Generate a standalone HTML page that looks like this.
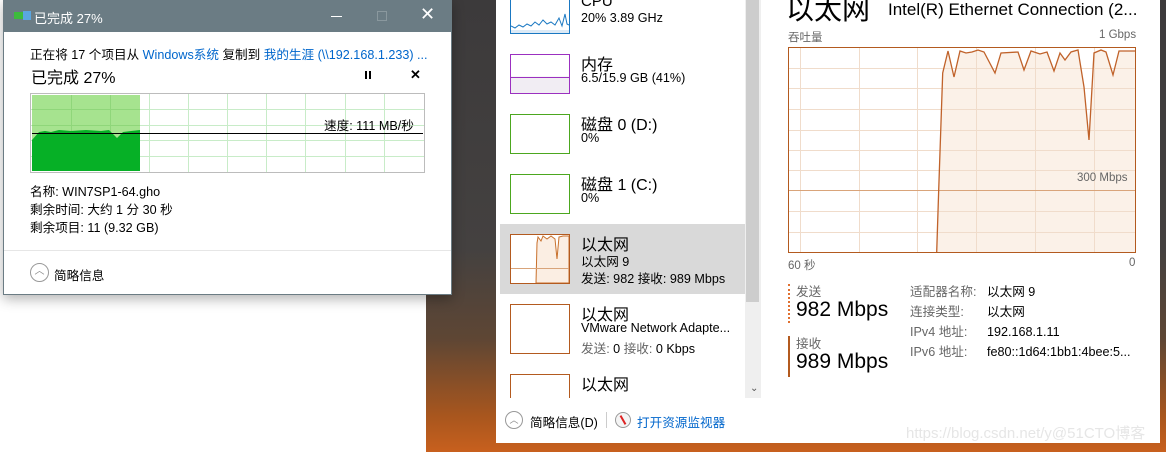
<!DOCTYPE html>
<html><head><meta charset="utf-8"><style>
*{margin:0;padding:0;box-sizing:border-box}
body{width:1166px;height:452px;overflow:hidden;position:relative;background:#fff;font-family:"Liberation Sans","Noto Sans CJK SC",sans-serif;color:#000}
.a{position:absolute;white-space:nowrap}
.bg{position:absolute;left:426px;top:0;width:740px;height:452px;background:linear-gradient(180deg,#3c3a3b 0%,#444140 55%,#5e4634 75%,#a8561e 92%,#c8601e 100%)}
.blue{color:#0066cc}
.gray{color:#666}
</style></head><body>
<div class="bg"></div>
<!-- copy dialog -->
<div class="a" style="left:3px;top:0;width:449px;height:295px;background:#fff;border:1px solid #6b7c84;box-shadow:0 4px 12px rgba(0,0,0,.3)">
 <div class="a" style="left:0;top:0;width:447px;height:31px;background:#6b7c84"></div>
 <div class="a" style="left:10px;top:11px;width:10px;height:7px;background:#3dbb3d"></div>
 <div class="a" style="left:19px;top:10px;width:8px;height:9px;background:#5aa6e0"></div>
 <div class="a" style="left:30px;top:7px;font-size:13px;color:#fff">已完成 27%</div>
 <div class="a" style="left:327px;top:15px;width:11px;height:1px;background:#fff"></div>
 <div class="a" style="left:373px;top:10px;width:10px;height:10px;border:1px solid #8a989e"></div>
 <div class="a" style="left:416px;top:3px;font-size:18px;color:#fff">✕</div>
 <div class="a" style="left:26px;top:43px;font-size:12.6px">正在将 17 个项目从 <span class="blue">Windows系统</span> 复制到 <span class="blue">我的生涯 (\\192.168.1.233) ...</span></div>
 <div class="a" style="left:27px;top:63px;font-size:16px">已完成 27%</div>
 <div class="a" style="left:361px;top:70px;height:8px;border-left:2px solid #000;border-right:2px solid #000;width:6px"></div>
 <div class="a" style="left:406px;top:66px;font-size:13px;font-weight:bold">✕</div>
 <div class="a" style="left:26px;top:92px;width:395px;height:80px;border:1px solid #bcbcbc;background:#fff">
  <svg width="393" height="78" style="position:absolute;left:0;top:0">
   <g stroke="#c8ecc8" stroke-width="1">
    <line x1="118.5" y1="0" x2="118.5" y2="78"/><line x1="157.5" y1="0" x2="157.5" y2="78"/><line x1="196.5" y1="0" x2="196.5" y2="78"/><line x1="235.5" y1="0" x2="235.5" y2="78"/><line x1="274.5" y1="0" x2="274.5" y2="78"/><line x1="314.5" y1="0" x2="314.5" y2="78"/><line x1="353.5" y1="0" x2="353.5" y2="78"/>
    <line x1="0" y1="15.5" x2="393" y2="15.5"/><line x1="0" y1="31.5" x2="393" y2="31.5"/><line x1="0" y1="46.5" x2="393" y2="46.5"/><line x1="0" y1="62.5" x2="393" y2="62.5"/>
   </g>
   <rect x="1" y="1" width="108" height="76" fill="#a6e38f"/>
   <g stroke="#8fd67a"><line x1="40.5" y1="1" x2="40.5" y2="77"/><line x1="79.5" y1="1" x2="79.5" y2="77"/><line x1="1" y1="15.5" x2="109" y2="15.5"/><line x1="1" y1="31.5" x2="109" y2="31.5"/></g>
   <path d="M1,46 L8,38 L14,37 L20,38 L28,36 L40,37 L55,36 L70,37 L78,36 L86,44 L92,38 L100,37 L109,36 L109,77 L1,77Z" fill="#06b026"/>
   <line x1="1" y1="39.5" x2="392" y2="39.5" stroke="#000"/>
  </svg>
  <div class="a" style="left:293px;top:21px;font-size:12.6px">速度: 111 MB/秒</div>
 </div>
 <div class="a" style="left:26px;top:182px;font-size:12.6px;line-height:18px">名称: WIN7SP1-64.gho<br>剩余时间: 大约 1 分 30 秒<br>剩余项目: 11 (9.32 GB)</div>
 <div class="a" style="left:0;top:249px;width:447px;height:1px;background:#e6e6e6"></div>
 <div class="a" style="left:26px;top:262px;width:19px;height:19px;border:1px solid #999;border-radius:50%;font-size:10px;color:#888;text-align:center;line-height:16px">︿</div>
 <div class="a" style="left:50px;top:264px;font-size:12.6px">简略信息</div>
</div>
<!-- task manager -->
<div class="a" style="left:496px;top:0;width:664px;height:443px;background:#fff"></div>
<div class="a" style="left:745px;top:0;width:16px;height:398px;background:#efefef"></div>
<div class="a" style="left:746px;top:0;width:13px;height:302px;background:#cdcdcd"></div>
<div class="a" style="left:750px;top:383px;font-size:10px;color:#555">⌄</div>
<div class="a" style="left:500px;top:224px;width:245px;height:70px;background:#d9d9d9"></div>
<!-- thumbs -->
<div class="a" style="left:510px;top:0;width:60px;height:34px;border:1px solid #1a78c2;border-top:none;background:#fff"><svg width="58" height="33"><path d="M0,26 L4,28 L8,25 L12,27 L16,24 L20,26 L24,22 L28,25 L32,20 L36,24 L40,22 L44,25 L48,18 L51,26 L54,14 L56,24 L58,25" fill="none" stroke="#1a78c2"/><rect x="0" y="30" width="58" height="3" fill="#dceaf6"/></svg></div>
<div class="a" style="left:510px;top:54px;width:60px;height:40px;border:1px solid #9b30c0;background:linear-gradient(#fff 0,#fff 57%,#f1edf3 57%)"><div style="position:absolute;left:0;top:22px;width:58px;height:1px;background:#9b30c0"></div></div>
<div class="a" style="left:510px;top:114px;width:60px;height:40px;border:1px solid #4ca71f"></div>
<div class="a" style="left:510px;top:174px;width:60px;height:40px;border:1px solid #4ca71f"></div>
<div class="a" style="left:510px;top:234px;width:60px;height:50px;border:1px solid #b35a1f;background:#fff"><svg width="58" height="48"><path d="M25,48 L26,8 L27,2 L30,6 L32,1 L36,4 L40,1 L44,4 L46,24 L48,2 L52,1 L58,1 L58,48Z" fill="#fbeee3" stroke="#c8702c"/><line x1="0" y1="33.5" x2="58" y2="33.5" stroke="#d9a47a"/></svg></div>
<div class="a" style="left:510px;top:304px;width:60px;height:50px;border:1px solid #b35a1f"></div>
<div class="a" style="left:510px;top:374px;width:60px;height:24px;border:1px solid #b35a1f;border-bottom:none"></div>
<div class="a" style="left:496px;top:398px;width:264px;height:45px;background:#fff"></div>
<!-- labels -->
<div class="a" style="left:581px;top:-7px;font-size:15px">CPU</div>
<div class="a" style="left:581px;top:11px;font-size:12.6px">20% 3.89 GHz</div>
<div class="a" style="left:581px;top:51px;font-size:16px">内存</div>
<div class="a" style="left:581px;top:71px;font-size:12.6px">6.5/15.9 GB (41%)</div>
<div class="a" style="left:581px;top:111px;font-size:16px">磁盘 0 (D:)</div>
<div class="a" style="left:581px;top:131px;font-size:12.6px">0%</div>
<div class="a" style="left:581px;top:171px;font-size:16px">磁盘 1 (C:)</div>
<div class="a" style="left:581px;top:191px;font-size:12.6px">0%</div>
<div class="a" style="left:581px;top:231px;font-size:16px">以太网</div>
<div class="a" style="left:581px;top:251px;font-size:12.6px">以太网 9</div>
<div class="a" style="left:581px;top:268px;font-size:12.6px">发送: 982 接收: 989 Mbps</div>
<div class="a" style="left:581px;top:301px;font-size:16px">以太网</div>
<div class="a" style="left:581px;top:321px;font-size:12.6px">VMware Network Adapte...</div>
<div class="a" style="left:581px;top:338px;font-size:12.6px"><span class="gray">发送:</span> 0 <span class="gray">接收:</span> 0 Kbps</div>
<div class="a" style="left:581px;top:371px;font-size:16px">以太网</div>
<div class="a" style="left:505px;top:411px;width:18px;height:18px;border:1px solid #999;border-radius:50%;font-size:9px;color:#888;text-align:center;line-height:16px">︿</div>
<div class="a" style="left:530px;top:412px;font-size:12.6px">简略信息(D)</div>
<div class="a" style="left:606px;top:412px;width:1px;height:16px;background:#ccc"></div>
<div class="a" style="left:615px;top:412px;width:16px;height:16px;border:1px solid #999;border-radius:50%;background:#f4f4f4"><div style="position:absolute;left:6px;top:2px;width:2px;height:10px;background:#d22;transform:rotate(-30deg)"></div></div>
<div class="a blue" style="left:637px;top:412px;font-size:12.6px">打开资源监视器</div>
<!-- right detail -->
<div class="a" style="left:786px;top:-12px;font-size:28px">以太网</div>
<div class="a" style="left:888px;top:0px;font-size:17px">Intel(R) Ethernet Connection (2...</div>
<div class="a gray" style="left:788px;top:29px;font-size:11.5px">吞吐量</div>
<div class="a gray" style="left:1099px;top:29px;font-size:11.5px">1 Gbps</div>
<div class="a" style="left:788px;top:47px;width:348px;height:206px;border:1px solid #b35a1f;background:#fff">
<svg width="346" height="204" style="position:absolute;left:0;top:0">
<path d="M147.7,204 L149.7,142 L153.7,25 L159,3 L165,29 L171,3 L177,5 L183,4 L189,2 L195,4 L206,25 L212,5 L229,4 L235,22 L242,3 L251,6 L258,4 L265,23 L271,5 L276,12 L282,4 L289,2 L295,39 L300,92 L305,5 L312,2 L317,4 L324,27 L330,3 L346,3 L346,204Z" fill="#fbf1e8"/>
<g stroke="#f0dccb" stroke-width="1">
<line x1="11.5" y1="0" x2="11.5" y2="204"/><line x1="70.5" y1="0" x2="70.5" y2="204"/><line x1="128.5" y1="0" x2="128.5" y2="204"/><line x1="187.5" y1="0" x2="187.5" y2="204"/><line x1="246.5" y1="0" x2="246.5" y2="204"/><line x1="305.5" y1="0" x2="305.5" y2="204"/>
<line x1="0" y1="20.5" x2="346" y2="20.5"/><line x1="0" y1="40.5" x2="346" y2="40.5"/><line x1="0" y1="61.5" x2="346" y2="61.5"/><line x1="0" y1="82.5" x2="346" y2="82.5"/><line x1="0" y1="102.5" x2="346" y2="102.5"/><line x1="0" y1="122.5" x2="346" y2="122.5"/><line x1="0" y1="163.5" x2="346" y2="163.5"/><line x1="0" y1="184.5" x2="346" y2="184.5"/>
</g>
<line x1="0" y1="142.5" x2="346" y2="142.5" stroke="#d9a47a"/>
<path d="M147.7,204 L149.7,142 L153.7,25 L159,3 L165,29 L171,3 L177,5 L183,4 L189,2 L195,4 L206,25 L212,5 L229,4 L235,22 L242,3 L251,6 L258,4 L265,23 L271,5 L276,12 L282,4 L289,2 L295,39 L300,92 L305,5 L312,2 L317,4 L324,27 L330,3 L346,3" fill="none" stroke="#c0622a" stroke-width="1.3"/>
</svg>
<div class="a gray" style="left:288px;top:124px;font-size:11.5px">300 Mbps</div>
</div>
<div class="a gray" style="left:788px;top:257px;font-size:11.5px">60 秒</div>
<div class="a gray" style="left:1129px;top:257px;font-size:11.5px">0</div>
<div class="a" style="left:788px;top:284px;width:0;height:39px;border-left:2px dotted #e07030"></div>
<div class="a gray" style="left:796px;top:281px;font-size:12.6px">发送</div>
<div class="a" style="left:796px;top:298px;font-size:21px">982 Mbps</div>
<div class="a" style="left:788px;top:336px;width:2px;height:41px;background:#b35a1f"></div>
<div class="a gray" style="left:796px;top:333px;font-size:12.6px">接收</div>
<div class="a" style="left:796px;top:350px;font-size:21px">989 Mbps</div>
<div class="a gray" style="left:910px;top:282px;font-size:12.6px;line-height:20px">适配器名称:<br>连接类型:<br>IPv4 地址:<br>IPv6 地址:</div>
<div class="a" style="left:987px;top:282px;font-size:12.6px;line-height:20px">以太网 9<br>以太网<br>192.168.1.11<br>fe80::1d64:1bb1:4bee:5...</div>
<div class="a" style="left:906px;top:422px;font-size:15px;color:#e6e6e6">https://blog.csdn.net/y@51CTO博客</div>
</body></html>
